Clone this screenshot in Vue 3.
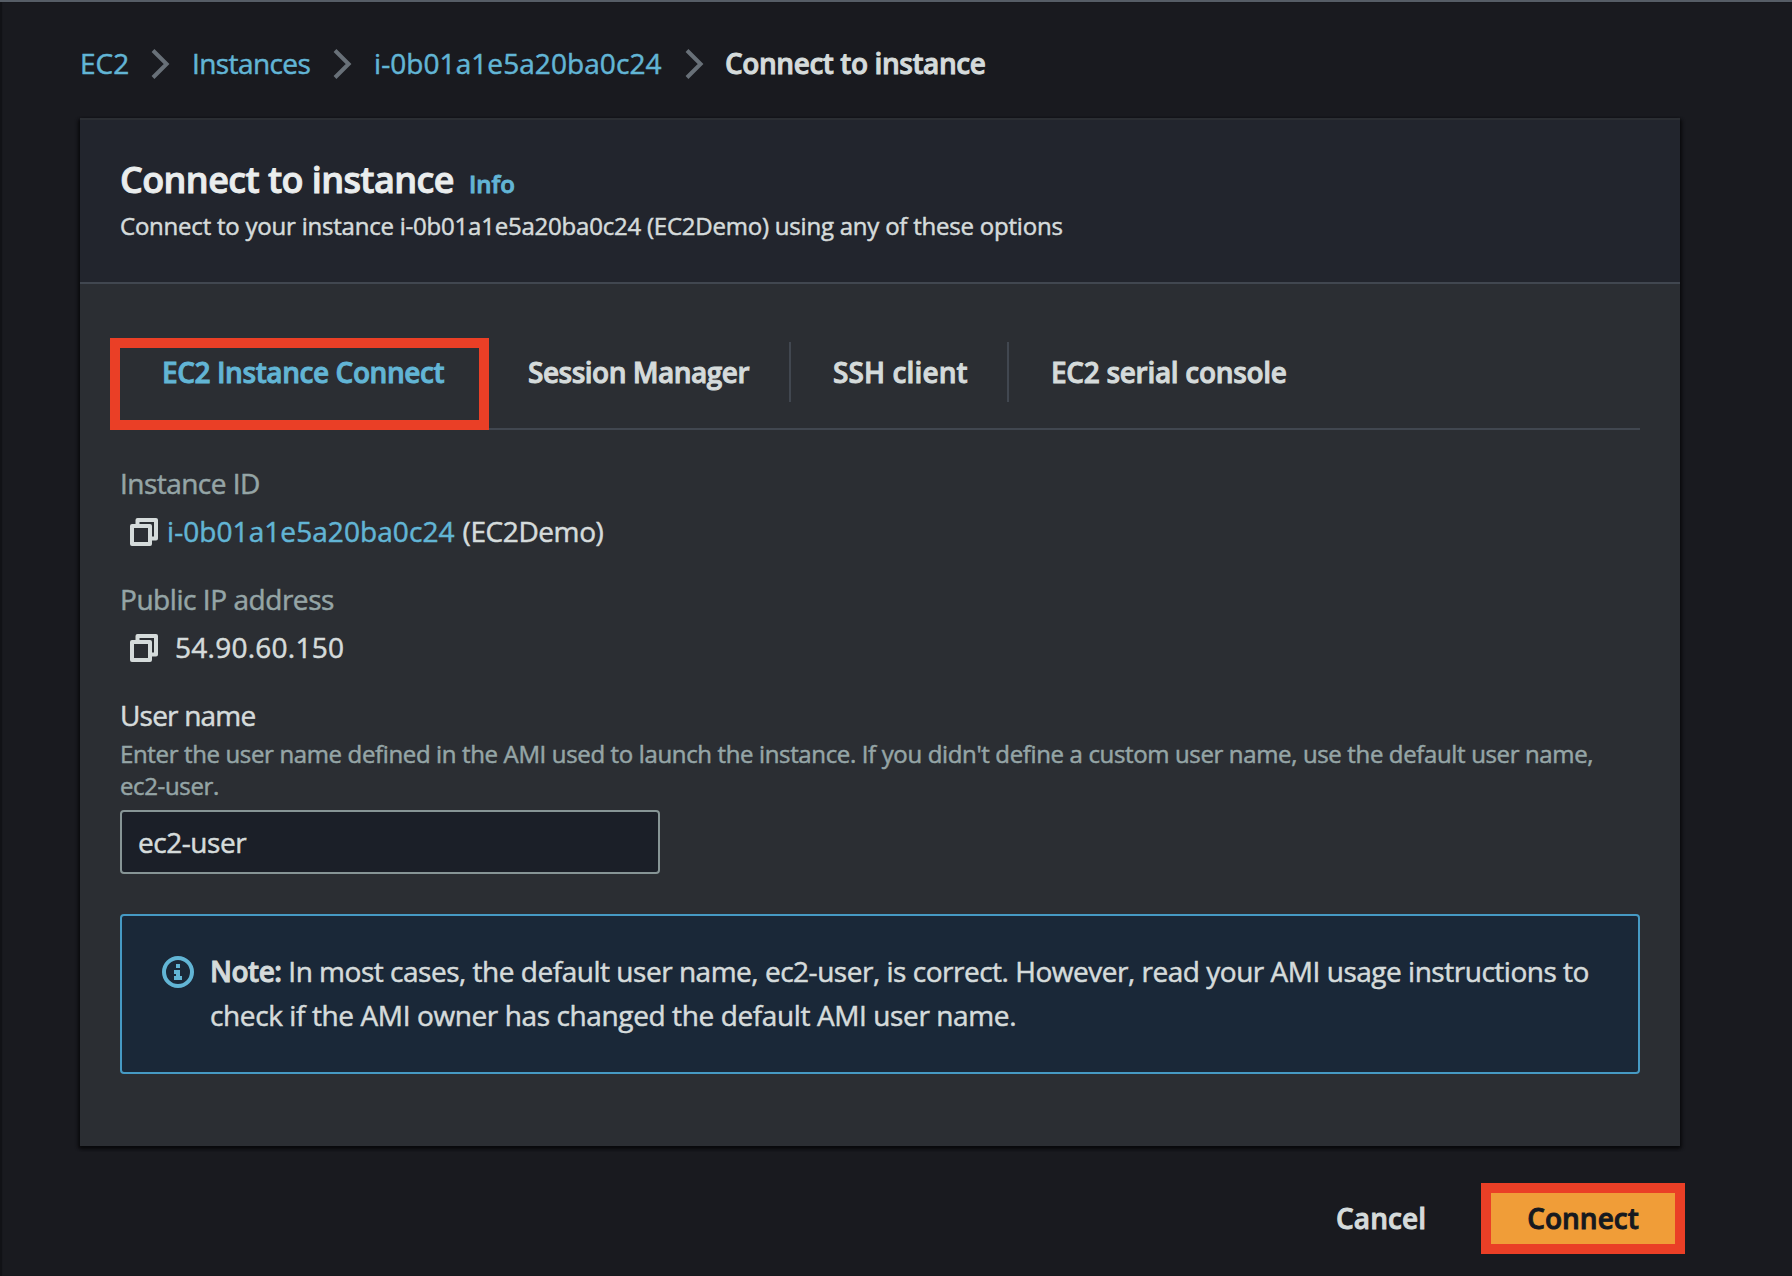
<script setup>
import { ref } from 'vue'

const instanceId = 'i-0b01a1e5a20ba0c24'
const username = ref('ec2-user')
const active = ref(0)
const tabs = ['EC2 Instance Connect', 'Session Manager', 'SSH client', 'EC2 serial console']
</script>

<template>
  <div class="page">
    <nav class="crumbs">
      <a class="c-root">EC2</a>
      <svg class="chev" viewBox="0 0 19 30"><path d="M2 1.5 L15.6 15 L2 28.5" /></svg>
      <a class="c-list">Instances</a>
      <svg class="chev" viewBox="0 0 19 30"><path d="M2 1.5 L15.6 15 L2 28.5" /></svg>
      <a class="c-id">{{ instanceId }}</a>
      <svg class="chev" viewBox="0 0 19 30"><path d="M2 1.5 L15.6 15 L2 28.5" /></svg>
      <span class="c-current">Connect to instance</span>
    </nav>

    <main class="card">
      <header class="card-head">
        <div class="title-row">
          <h1>Connect to instance</h1>
          <a class="info">Info</a>
        </div>
        <p class="subtitle">Connect to your instance {{ instanceId }} (EC2Demo) using any of these options</p>
      </header>

      <div class="card-body">
        <div class="tabs">
          <button
            v-for="(tab, i) in tabs"
            :key="tab"
            :class="['tab', 'tab-' + i, { active: i === active }]"
            @click="active = i"
          >{{ tab }}</button>
          <span class="marker"></span>
        </div>

        <div class="field field-id">
          <div class="label label-id">Instance ID</div>
          <div class="value">
            <svg class="copy" viewBox="0 0 28 28">
              <path d="M7.5 7 V2 H26 V20.5 H21" />
              <path d="M2 8 H20 V26 H2 Z" />
            </svg>
            <a class="id-link">{{ instanceId }}</a>
            <span class="id-name">(EC2Demo)</span>
          </div>
        </div>

        <div class="field">
          <div class="label label-ip">Public IP address</div>
          <div class="value">
            <svg class="copy" viewBox="0 0 28 28">
              <path d="M7.5 7 V2 H26 V20.5 H21" />
              <path d="M2 8 H20 V26 H2 Z" />
            </svg>
            <span class="ip">54.90.60.150</span>
          </div>
        </div>

        <div class="field">
          <label class="label user-label" for="username">User name</label>
          <div class="help">
            Enter the user name defined in the AMI used to launch the instance. If you didn't define a custom user name, use the default user name,<br>ec2-user.
          </div>
          <input id="username" v-model="username" class="input" type="text">
        </div>

        <div class="note">
          <svg class="note-icon" viewBox="0 0 32 32">
            <circle cx="16" cy="16" r="14" fill="none" stroke="currentColor" stroke-width="4" />
            <path fill="currentColor" d="M14 8h4v4h-4z M12 14h6v6h2v4h-8v-4h2v-2h-2z" />
          </svg>
          <p>
            <span class="line-1"><b>Note:</b> In most cases, the default user name, ec2-user, is correct. However, read your AMI usage instructions to</span>
            <span class="line-2">check if the AMI owner has changed the default AMI user name.</span>
          </p>
        </div>
      </div>
    </main>

    <footer class="actions">
      <button class="cancel">Cancel</button>
      <button class="connect">Connect</button>
    </footer>
  </div>
</template>

<style>
body {
  background: #191a1f;
}
</style>

<style scoped>
.page {
  box-sizing: border-box;
  width: 1792px;
  height: 1276px;
  padding: 39px 112px 0 80px;
  overflow: hidden;
  border-top: 2px solid #565d66;
  background: #191a1f;
  box-shadow: inset 2px 0 1px #111216;
  color: #d5dbdb;
  font: 400 28px/44px "Open Sans", "Noto Sans", sans-serif;
  -webkit-text-stroke: 0.5px currentColor;
}
h1, p {
  margin: 0;
}
button {
  margin: 0;
  padding: 0;
  border: 0;
  background: none;
  color: inherit;
  font: inherit;
  text-align: left;
  cursor: pointer;
}
a {
  color: #62b5d5;
}
.c-current, h1, .info, .tab, .note b, .cancel, .connect {
  -webkit-text-stroke: 0.9px currentColor;
}

.crumbs {
  display: grid;
  grid-template-columns: 71px 41px 141px 41px 311px 40px auto;
  height: 77px;
  white-space: nowrap;
}
.c-list { letter-spacing: -0.6px; }
.c-id { letter-spacing: 0.07px; }
.c-current { font-weight: 600; letter-spacing: -0.43px; }
.chev {
  width: 19px;
  height: 30px;
  margin-top: 8px;
}
.chev path {
  fill: none;
  stroke: #687078;
  stroke-width: 4;
}

.card {
  box-sizing: border-box;
  width: 1600px;
  height: 1028px;
  border-top: 2px solid #2b2e33;
  background: #2b2e33;
  box-shadow: 0 2px 3px #08090b, 2px 2px 3px #0e0f12, -2px 2px 3px #0e0f12;
}
.card-head {
  box-sizing: border-box;
  height: 164px;
  padding: 38px 40px 0;
  border-bottom: 2px solid #414750;
  background: #22252d;
}
.title-row {
  display: flex;
  align-items: baseline;
  height: 44px;
}
h1 {
  color: #eaeded;
  font-size: 36px;
  font-weight: 600;
  line-height: 44px;
  letter-spacing: -0.6px;
}
.info {
  margin-left: 15px;
  font-size: 24px;
  font-weight: 600;
}
.subtitle {
  margin-top: 8px;
  font-size: 24px;
  line-height: 32px;
  letter-spacing: -0.22px;
}

.card-body {
  padding: 58px 40px 0;
}
.tabs {
  position: relative;
  display: grid;
  grid-template-columns: 366px 305px 218px auto;
  height: 86px;
  border-bottom: 2px solid #414750;
}
.tab {
  box-sizing: border-box;
  height: 60px;
  padding: 0 0 0 42px;
  font-weight: 600;
  line-height: 60px;
  white-space: nowrap;
}
.tab.active { color: #62b5d5; }
.tab-0 { letter-spacing: -0.42px; }
.tab-1 { border-right: 2px solid #414750; letter-spacing: -0.5px; }
.tab-2 { border-right: 2px solid #414750; letter-spacing: 0.12px; }
.tab-3 { letter-spacing: -0.3px; }
.marker {
  position: absolute;
  top: -4px;
  left: -10px;
  box-sizing: border-box;
  width: 379px;
  height: 92px;
  border: 10px solid #ea3f26;
  pointer-events: none;
}

.field {
  margin-top: 24px;
}
.field-id {
  margin-top: 31px;
}
.label {
  display: block;
  color: #95a5a6;
}
.label-id { letter-spacing: -0.53px; }
.label-ip { letter-spacing: -0.45px; }
.user-label { color: #d5dbdb; letter-spacing: -0.8px; }
.value {
  display: flex;
  align-items: center;
  margin-top: 4px;
  padding-left: 10px;
  white-space: nowrap;
}
.copy {
  width: 28px;
  height: 28px;
  margin-top: 2px;
  fill: none;
  stroke: #d5dbdb;
  stroke-width: 4;
  stroke-linejoin: round;
}
.id-link { margin-left: 9px; letter-spacing: 0.07px; }
.id-name { margin-left: 8px; letter-spacing: -0.41px; }
.ip { margin-left: 17px; letter-spacing: 0.26px; }
.help {
  height: 64px;
  margin-top: 1px;
  color: #95a5a6;
  font-size: 24px;
  line-height: 32px;
  letter-spacing: -0.36px;
  white-space: nowrap;
}
.input {
  display: block;
  box-sizing: border-box;
  width: 540px;
  height: 64px;
  margin: 8px 0 0;
  padding: 0 16px;
  border: 2px solid #879596;
  border-radius: 4px;
  outline: 0;
  background: #1b1f28;
  color: #d5dbdb;
  font: inherit;
  letter-spacing: -0.45px;
  -webkit-text-stroke: inherit;
}

.note {
  box-sizing: border-box;
  display: flex;
  height: 160px;
  margin-top: 40px;
  padding: 33px 0 0 40px;
  border: 2px solid #469ac4;
  border-radius: 4px;
  background: #1a2838;
  white-space: nowrap;
}
.note-icon {
  width: 32px;
  height: 32px;
  margin: 7px 16px 0 0;
  color: #62b5d5;
}
.note p span { display: block; }
.line-1 { letter-spacing: -0.48px; }
.line-2 { letter-spacing: -0.39px; }
.note b { font-weight: 600; }

.actions {
  display: flex;
  justify-content: flex-end;
  margin: 37px -5px 0 0;
}
.cancel {
  height: 70px;
  margin-right: 55px;
  font-weight: 600;
  letter-spacing: 0.05px;
}
.connect {
  box-sizing: border-box;
  width: 204px;
  height: 71px;
  padding-bottom: 1px;
  border: 10px solid #ea3f26;
  background: #f09d38;
  color: #16191f;
  font-weight: 600;
  text-align: center;
}
</style>
